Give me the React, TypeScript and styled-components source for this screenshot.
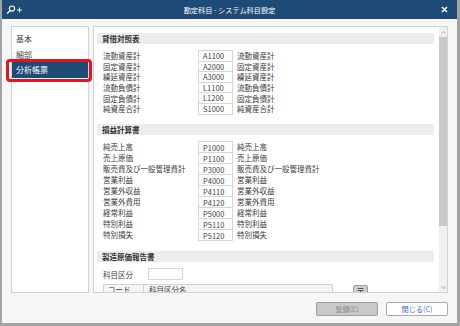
import React from 'react';
import styled, { createGlobalStyle } from 'styled-components';

const GlobalStyle = createGlobalStyle`
  html, body { margin: 0; padding: 0; }
  body {
    background: #a4a4a4;
    font-family: "Noto Sans CJK JP", "Liberation Sans", sans-serif;
    font-size: 7.5px;
    color: #3a3a3a;
  }
`;

const Window = styled.div`
  margin: 0 3px 0 2px;
  width: 455px;
  height: 323px;
  background: #f6f6f6;
  display: flex;
  flex-direction: column;
`;

const TitleBar = styled.div`
  height: 19px;
  flex: none;
  background: #1f4b77;
  color: #fff;
  display: grid;
  grid-template-columns: 60px 1fr 60px;
  align-items: center;
`;

const TitleText = styled.div`
  text-align: center;
  font-size: 7.2px;
`;

const TitleIcon = styled.div`
  display: flex;
  align-items: center;
  padding-left: 4px;
`;

const CloseBox = styled.div`
  display: flex;
  justify-content: flex-end;
  padding-right: 9px;
`;

const Body = styled.div`
  display: flex;
  gap: 4px;
  padding: 7px 9px 0;
  height: 267px;
  flex: none;
`;

const Nav = styled.div`
  width: 78px;
  flex: none;
  background: #fff;
  border: 1px solid #d2d2d2;
  box-sizing: border-box;
  padding: 4px 0 0;
`;

const NavItem = styled.div<{ $active?: boolean }>`
  position: relative;
  height: 15.5px;
  line-height: 15.5px;
  padding-left: 4px;
  font-size: 8px;
  color: ${p => (p.$active ? '#fff' : '#444')};
  background: ${p => (p.$active ? '#1f4b77' : 'transparent')};
`;

const Highlight = styled.div`
  position: absolute;
  top: -3px;
  bottom: -4px;
  left: -6px;
  right: -4px;
  border: 3px solid #e3141b;
  border-radius: 4px;
`;

const Main = styled.div`
  flex: 1;
  background: #fff;
  border: 1px solid #d2d2d2;
  box-sizing: border-box;
  display: flex;
  overflow: hidden;
`;

const Content = styled.div`
  flex: 1;
  padding: 6px 5px 0 3px;
  overflow: hidden;
`;

const SectionHead = styled.div`
  height: 11px;
  line-height: 11px;
  background: #ececec;
  padding-left: 5px;
  font-weight: bold;
  color: #333;
`;

const Rows = styled.div<{ $gapAfter: number }>`
  padding: 6px 0 ${p => p.$gapAfter}px 6px;
`;

const Row = styled.div<{ $h: number }>`
  display: grid;
  grid-template-columns: 95px 35px auto;
  align-items: center;
  height: ${p => p.$h}px;
`;

const Label = styled.span`
  white-space: nowrap;
`;

const CodeBox = styled.div<{ $h: number }>`
  height: ${p => p.$h + 1}px;
  line-height: ${p => p.$h}px;
  box-sizing: border-box;
  border: 1px solid #d6d6d6;
  padding-left: 4px;
  color: #444;
`;

const Name = styled.span`
  padding-left: 4px;
  white-space: nowrap;
`;

const FilterRow = styled.div`
  display: flex;
  align-items: center;
  gap: 15px;
  padding: 6px 0 0 6px;
`;

const SmallInput = styled.div`
  width: 35px;
  height: 12px;
  box-sizing: border-box;
  border: 1px solid #d6d6d6;
`;

const TableRow = styled.div`
  display: flex;
  align-items: flex-start;
  gap: 20px;
  padding: 4px 0 0 6px;
`;

const Table = styled.div`
  width: 230px;
  height: 20px;
  box-sizing: border-box;
  border: 1px solid #d2d2d2;
  display: grid;
  grid-template-columns: 40px 1fr;
  align-content: start;
`;

const Th = styled.div<{ $first?: boolean }>`
  height: 10px;
  line-height: 10px;
  padding-left: ${p => (p.$first ? 4 : 5)}px;
  border-right: ${p => (p.$first ? '1px solid #d2d2d2' : 'none')};
  background: #f4f4f4;
`;

const IconBtn = styled.div`
  width: 15px;
  height: 12px;
  margin-top: 1px;
  box-sizing: border-box;
  border: 1px solid #9c9c9c;
  border-radius: 2px;
  background: #cfcfcf;
  display: flex;
  justify-content: center;
  padding-top: 2px;
`;

const ScrollBar = styled.div`
  width: 8px;
  flex: none;
  background: #f0f0f0;
  display: flex;
  flex-direction: column;
  align-items: stretch;
`;

const Arrow = styled.div`
  height: 10px;
  display: flex;
  align-items: center;
  justify-content: center;
  flex: none;
`;

const Thumb = styled.div`
  height: 189px;
  background: #c9c9c9;
  flex: none;
`;

const Track = styled.div`
  flex: 1;
`;

const Footer = styled.div`
  display: flex;
  justify-content: flex-end;
  gap: 8px;
  padding: 9px 9px 0;
`;

const Button = styled.div<{ $disabled?: boolean }>`
  width: 62px;
  height: 14px;
  box-sizing: border-box;
  border: 1px solid ${p => (p.$disabled ? '#9e9e9e' : '#a8a8a8')};
  border-radius: 2px;
  background: ${p => (p.$disabled ? '#c9c9c9' : '#fff')};
  color: ${p => (p.$disabled ? '#8a8a8a' : '#3b6fd4')};
  text-align: center;
  line-height: 12px;
  font-size: 7.2px;
`;

const balance: [string, string][] = [
  ['流動資産計', 'A1100'],
  ['固定資産計', 'A2000'],
  ['繰延資産計', 'A3000'],
  ['流動負債計', 'L1100'],
  ['固定負債計', 'L1200'],
  ['純資産合計', 'S1000'],
];

const profit: [string, string][] = [
  ['純売上高', 'P1000'],
  ['売上原価', 'P1100'],
  ['販売費及び一般管理費計', 'P3000'],
  ['営業利益', 'P4000'],
  ['営業外収益', 'P4110'],
  ['営業外費用', 'P4120'],
  ['経常利益', 'P5000'],
  ['特別利益', 'P5110'],
  ['特別損失', 'P5120'],
];

const AccountRows: React.FC<{ items: [string, string][]; h: number; gapAfter: number }> = ({
  items,
  h,
  gapAfter,
}) => (
  <Rows $gapAfter={gapAfter}>
    {items.map(([name, code]) => (
      <Row key={code} $h={h}>
        <Label>{name}</Label>
        <CodeBox $h={h}>{code}</CodeBox>
        <Name>{name}</Name>
      </Row>
    ))}
  </Rows>
);

export default function App() {
  return (
    <>
      <GlobalStyle />
      <Window>
        <TitleBar>
          <TitleIcon>
            <svg width="18" height="10" viewBox="0 0 18 10">
              <circle cx="6" cy="3.6" r="2.6" fill="none" stroke="#fff" strokeWidth="1.2" />
              <line x1="4.1" y1="5.5" x2="1.2" y2="8.6" stroke="#fff" strokeWidth="1.4" />
              <line x1="11" y1="5" x2="16" y2="5" stroke="#fff" strokeWidth="1" />
              <line x1="13.5" y1="2.5" x2="13.5" y2="7.5" stroke="#fff" strokeWidth="1" />
            </svg>
          </TitleIcon>
          <TitleText>勘定科目 - システム科目設定</TitleText>
          <CloseBox>
            <svg width="7" height="7" viewBox="0 0 7 7">
              <path d="M1 1L6 6M6 1L1 6" stroke="#fff" strokeWidth="1.6" />
            </svg>
          </CloseBox>
        </TitleBar>
        <Body>
          <Nav>
            <NavItem>基本</NavItem>
            <NavItem>細部</NavItem>
            <NavItem $active>
              分析帳票
              <Highlight />
            </NavItem>
          </Nav>
          <Main>
            <Content>
              <SectionHead>貸借対照表</SectionHead>
              <AccountRows items={balance} h={10.6} gapAfter={10} />
              <SectionHead>損益計算書</SectionHead>
              <AccountRows items={profit} h={11} gapAfter={11.5} />
              <SectionHead>製造原価報告書</SectionHead>
              <FilterRow>
                <Label>科目区分</Label>
                <SmallInput />
              </FilterRow>
              <TableRow>
                <Table>
                  <Th $first>コード</Th>
                  <Th>科目区分名</Th>
                </Table>
                <IconBtn>
                  <svg width="7" height="6" viewBox="0 0 7 6">
                    <path d="M0.5 0.5H6.5M0.5 2.5H6.5M3.5 2.5V6" stroke="#555" strokeWidth="1" />
                  </svg>
                </IconBtn>
              </TableRow>
            </Content>
            <ScrollBar>
              <Arrow>
                <svg width="5" height="3" viewBox="0 0 5 3">
                  <path d="M0.5 2.5L2.5 0.5L4.5 2.5" stroke="#aaa" fill="none" strokeWidth="1" />
                </svg>
              </Arrow>
              <Thumb />
              <Track />
              <Arrow>
                <svg width="5" height="3" viewBox="0 0 5 3">
                  <path d="M0.5 0.5L2.5 2.5L4.5 0.5" stroke="#aaa" fill="none" strokeWidth="1" />
                </svg>
              </Arrow>
            </ScrollBar>
          </Main>
        </Body>
        <Footer>
          <Button $disabled>登録(E)</Button>
          <Button>閉じる(C)</Button>
        </Footer>
      </Window>
    </>
  );
}
